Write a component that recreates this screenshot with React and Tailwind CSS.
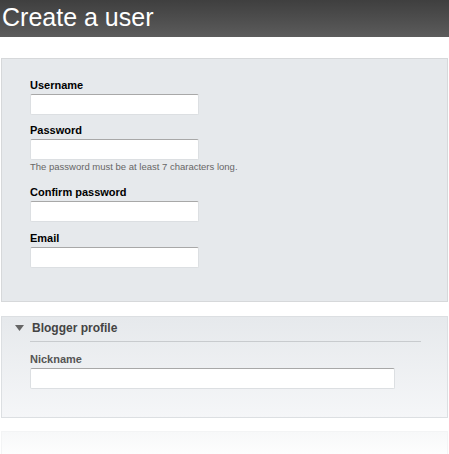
import React from "react";

const Field = ({ label, wide, help, muted, className = "" }) => (
  <div className={"flex flex-col " + className}>
    <label
      className={
        "text-[11px] font-bold leading-[13px] mb-[2px] " +
        (muted ? "text-[#555]" : "text-black")
      }
    >
      {label}
    </label>
    <input
      type="text"
      className={
        "h-[21px] bg-white border border-[#dcdfe2] border-t-[#a8a8a8] rounded-[2px] outline-none " +
        (wide ? "w-[365px]" : "w-[169px]")
      }
    />
    {help && (
      <p className="text-[9.5px] leading-[11px] text-[#666] mt-[1px]">{help}</p>
    )}
  </div>
);

export default function App() {
  return (
    <div className="w-[449px] h-[454px] bg-white overflow-hidden font-['Liberation_Sans',Arial,sans-serif]">
      <div className="h-[37px] bg-gradient-to-b from-[#3f3f3f] to-[#5c5c5c] px-[2px]">
        <h1 className="text-white text-[25px] leading-[34px]">Create a user</h1>
      </div>

      <div className="mt-[21px] mx-[1px] h-[244px] border border-[#d6d8da] bg-[#e6e9ec] px-[28px] pt-[20px] flex flex-col">
        <Field label="Username" />
        <Field
          label="Password"
          className="mt-[9px]"
          help="The password must be at least 7 characters long."
        />
        <Field label="Confirm password" className="mt-[14px]" />
        <Field label="Email" className="mt-[10px]" />
      </div>

      <div className="mt-[14px] mx-[1px] h-[102px] border border-[#dcdfe2] bg-gradient-to-b from-[#e6e9ec] to-[#f5f6f8] pt-[3px]">
        <div className="flex items-center h-[16px] pl-[13px]">
          <svg width="9" height="8" viewBox="0 0 9 8" className="mr-[8px]">
            <path d="M0 1 L9 1 L4.5 7 Z" fill="#666" />
          </svg>
          <span className="text-[12px] font-bold text-[#444]">Blogger profile</span>
        </div>
        <div className="ml-[28px] mr-[26px] mt-[5px] border-t border-[#c8cbce] pt-[11px]">
          <Field label="Nickname" wide muted />
        </div>
      </div>

      <div className="mt-[13px] mx-[1px] h-[30px] border border-[#f3f4f5] bg-gradient-to-b from-[#f7f8f9] to-white"></div>
    </div>
  );
}
